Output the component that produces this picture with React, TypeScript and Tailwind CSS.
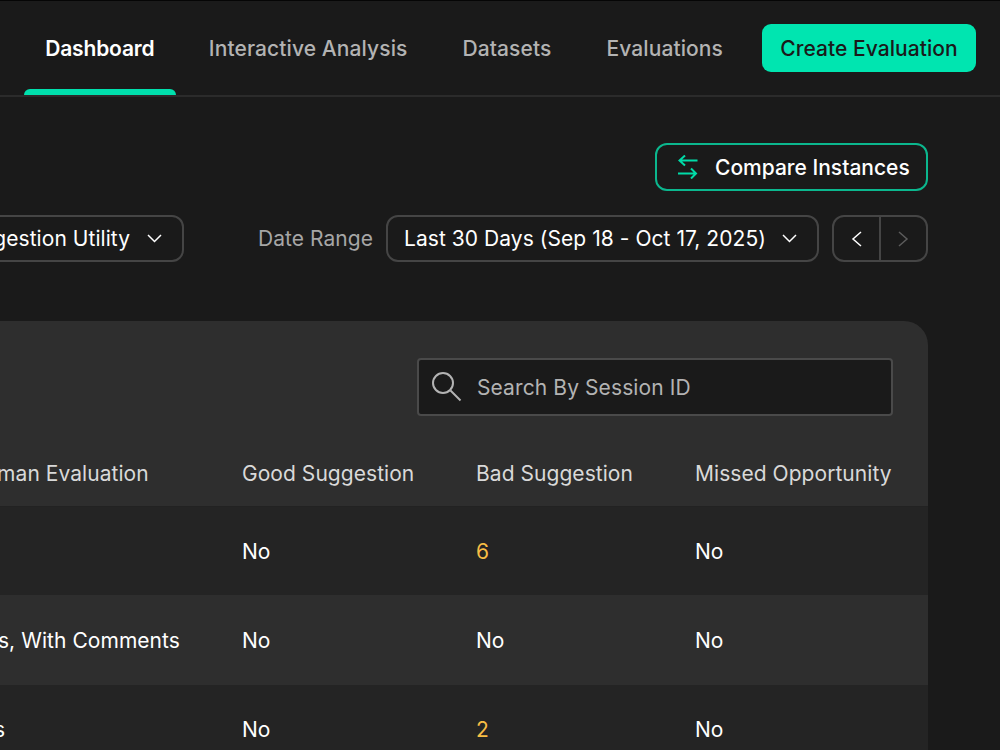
const navItems = ["Interactive Analysis", "Datasets", "Evaluations"];

const rows = [
  { human: "", good: "No", bad: "6", missed: "No", bg: "bg-[#242424]", h: "h-[88px]", shift: "" },
  { human: "Yes, With Comments", good: "No", bad: "No", missed: "No", bg: "bg-[#2e2e2e]", h: "h-[90px]", shift: "" },
  { human: "Yes", good: "No", bad: "2", missed: "No", bg: "bg-[#242424]", h: "h-[88px]", shift: "-ml-1" },
];

function SwapIcon() {
  return (
    <svg width="20" height="24" viewBox="0 0 20 24" fill="none" stroke="#00dba8" strokeWidth="2">
      <path d="M19.500 5.500H1.500M7 0.500 1.500 5.500 7 10.500" />
      <path d="M0 18.500h18M13 13.500 18 18.500 13 23.500" />
    </svg>
  );
}

function SearchIcon() {
  return (
    <svg width="30" height="30" viewBox="0 0 30 30" fill="none" stroke="#b3b3b3" strokeWidth="2">
      <circle cx="11" cy="11" r="10" />
      <path d="M18.500 18.500 28.500 28.500" />
    </svg>
  );
}

function Chevron({ d, w, h, className }: { d: string; w: number; h: number; className?: string }) {
  return (
    <svg width={w} height={h} viewBox={`0 0 ${w} ${h}`} fill="none" stroke="currentColor" strokeWidth="1.500" className={className}>
      <path d={d} />
    </svg>
  );
}

export default function App() {
  return (
    <div className="w-[1000px] h-[750px] overflow-hidden bg-[#1a1a1a] border-t border-[#050505] text-white text-[21px] tracking-[0.05px] whitespace-nowrap font-['Inter','Liberation_Sans',sans-serif]">
      <header className="h-[94px] border-b-2 border-[#2b2b2b] flex items-center justify-end pr-6 box-content leading-8">
        <div className="relative w-[152px] h-full flex items-center justify-center pt-[2px] font-semibold tracking-[-0.15px]">
          Dashboard
          <div className="absolute left-0 right-0 bottom-0 h-[6px] rounded-t-[6px] bg-[#00e0ad]" />
        </div>
        <nav className="flex items-center gap-[55px] ml-[33px] pt-[2px] font-medium tracking-[0.1px] text-[#b3b3b3]">
          {navItems.map((item) => (
            <span key={item}>{item}</span>
          ))}
        </nav>
        <button className="ml-[39px] w-[214px] h-12 pt-[2px] rounded-[9px] bg-[#00e5b0] text-[#1a1a1a] font-medium">
          Create Evaluation
        </button>
      </header>

      <main className="flex flex-col items-end pr-[72px] pt-[46px]">
        <button className="w-[273px] h-12 flex items-center gap-[17px] pl-[21px] rounded-[12px] border-2 border-[#0bb78e] font-medium leading-8 tracking-normal">
          <SwapIcon />
          <span className="pt-[2px]">Compare Instances</span>
        </button>

        <div className="mt-6 flex items-center h-[47px]">
          <div className="shrink-0 h-full flex items-center gap-[17px] pl-4 pr-[20px] rounded-[12px] border-2 border-[#454545]">
            Suggestion Utility
            <Chevron w={15} h={9} d="M1 1l6.500 6.500L14 1" />
          </div>
          <span className="ml-[74px] text-[#a6a6a6]">Date Range</span>
          <div className="ml-[13px] w-[433px] h-full flex items-center justify-between pl-[16px] pr-[20px] rounded-[12px] border-2 border-[#454545]">
            Last 30 Days (Sep 18 - Oct 17, 2025)
            <Chevron w={15} h={9} d="M1 1l6.500 6.500L14 1" />
          </div>
          <div className="ml-[13px] w-[96px] h-full flex rounded-[12px] border-2 border-[#454545]">
            <div className="flex-1 flex items-center justify-center border-r-2 border-[#454545]">
              <Chevron w={11} h={16} d="M10 1 2 8l8 7" />
            </div>
            <div className="flex-1 flex items-center justify-center text-[#5c5c5c]">
              <Chevron w={11} h={16} d="M1 1l8 7-8 7" />
            </div>
          </div>
        </div>

        <section className="mt-[59px] w-[1028px] rounded-t-[24px] bg-[#2e2e2e] overflow-hidden">
          <div className="flex justify-end pt-[37px] pr-[35px]">
            <div className="w-[476px] h-[58px] flex items-center gap-[15px] pl-[13px] rounded border-2 border-[#4a4a4a] bg-[#1a1a1a] tracking-[0.1px] text-[#b3b3b3]">
              <SearchIcon />
              <span className="pt-[2px]">Search By Session ID</span>
            </div>
          </div>

          <div className="grid grid-cols-[273px_234px_219px_233px] pl-[69px] h-[91px] pt-[25px] items-center border-b border-[#222222] text-[#d9d9d9]">
            <span>Human Evaluation</span>
            <span>Good Suggestion</span>
            <span>Bad Suggestion</span>
            <span>Missed Opportunity</span>
          </div>

          {rows.map((row, i) => (
            <div
              key={i}
              className={`grid grid-cols-[269px_234px_219px_233px] pl-[73px] pt-[2px] items-center ${row.bg} ${row.h}`}
            >
              <span className={row.shift}>{row.human}</span>
              <span>{row.good}</span>
              <span className={row.bad === "No" ? "" : "text-[#f7bd45]"}>{row.bad}</span>
              <span>{row.missed}</span>
            </div>
          ))}
        </section>
      </main>
    </div>
  );
}
